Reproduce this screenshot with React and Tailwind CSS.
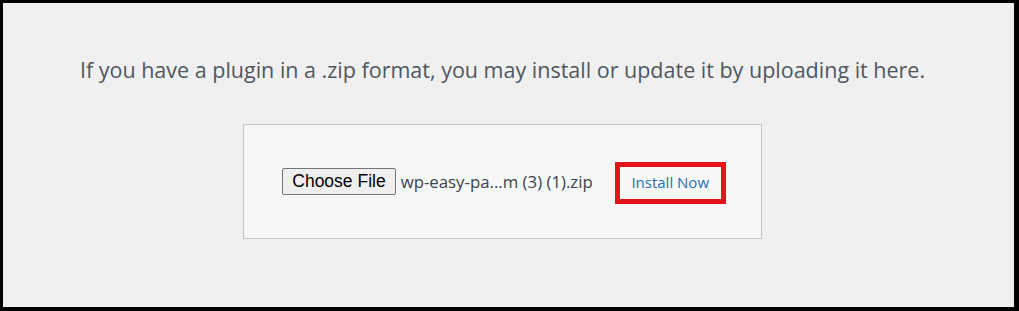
export default function App() {
  return (
    <div className="w-[1019px] h-[311px] border-black border-t-[3px] border-l-[3px] border-r-[5px] border-b-[4px] bg-[#f0f0f1] flex flex-col items-center pr-[12px]">
      <p className="mt-[52px] text-[21.5px] leading-[30px] text-[#50575e] whitespace-nowrap font-['Open_Sans','Noto_Sans',sans-serif]">
        If you have a plugin in a .zip format, you may install or update it by uploading it here.
      </p>
      <div className="mt-[39px] w-[519px] h-[115px] border border-[#c3c4c7] bg-[#f6f7f7] flex items-center justify-center">
        <div className="flex items-center pl-[3px]">
          <button className="h-[27px] px-[9px] bg-[#efefef] border border-[#767676] rounded-[2px] text-[17.5px] leading-none text-black font-['Liberation_Sans',Arial,sans-serif]">
            Choose File
          </button>
          <span className="ml-[5px] text-[16.8px] text-[#3c434a] font-['Open_Sans','Noto_Sans',sans-serif]">
            wp-easy-pa...m (3) (1).zip
          </span>
          <div className="ml-[22px] w-[111px] h-[42px] border-[5px] border-[#e3151a] flex items-center justify-center mt-[2px]">
            <span className="text-[15px] text-[#2271b1] font-['Open_Sans','Noto_Sans',sans-serif]">
              Install Now
            </span>
          </div>
        </div>
      </div>
    </div>
  );
}
